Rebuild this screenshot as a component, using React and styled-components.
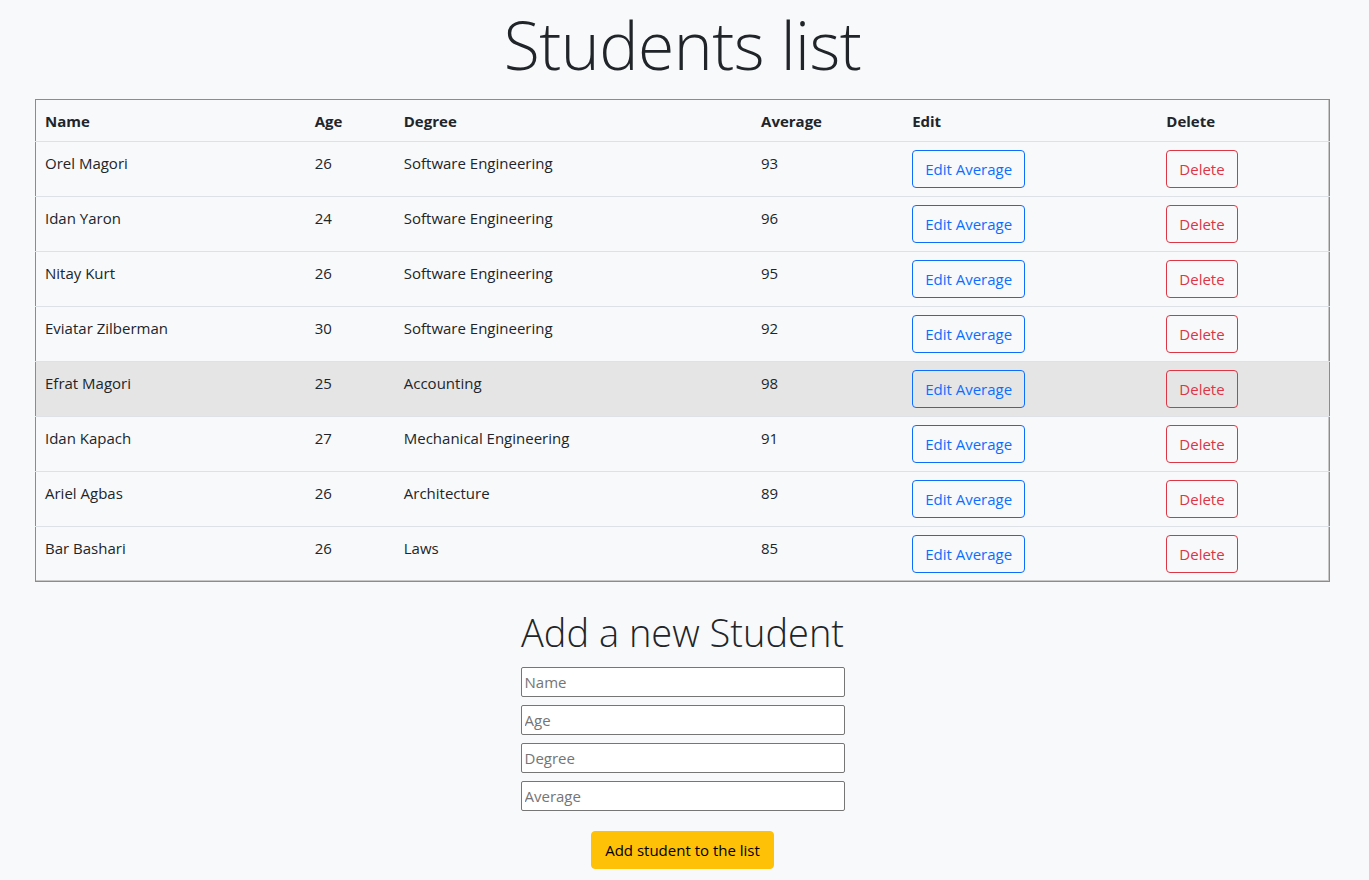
import React, { useState } from 'react'
import styled, { createGlobalStyle } from 'styled-components'

const GlobalStyle = createGlobalStyle`
body {
  margin: 0;
  background-color: #f8f9fa;
  color: #212529;
  font-family: 'Open Sans', 'Noto Sans', sans-serif;
  font-size: 15px;
  line-height: 1.5;
}
`

const Page = styled.div`
display: flex;
flex-direction: column;
align-items: center;
padding: 0 39px 11px 35px;
`
const Title = styled.h1`
font-size: 66px;
font-weight: 300;
line-height: 1.2;
margin: 5px 0 15px 0;
letter-spacing: -0.5px;
`
const Table = styled.table`
width: 100%;
table-layout: fixed;
border-collapse: collapse;
border: 1px solid #8c8c8c;
box-shadow: inset -1px -1px 0 #c8c8c8;
`
const HeadCell = styled.th`
box-sizing: border-box;
text-align: left;
font-weight: 700;
padding: 9px 9px 8px 9px;
line-height: 24px;
width: ${props => props.w}px;
border-bottom: 1px solid #dee2e6;
`
const Row = styled.tr`
background-color: ${props => props.hover ? '#e5e5e6' : 'transparent'};
border-bottom: ${props => props.last ? 'none' : '1px solid #dee2e6'};
`
const Cell = styled.td`
padding: 8px 9px;
vertical-align: top;
line-height: 26px;
`
const OutlineButton = styled.button`
font-family: inherit;
font-size: 15px;
line-height: 24px;
padding: 6px 12px;
border-radius: 4px;
background: transparent;
cursor: pointer;
color: ${props => props.color};
border: 1px solid ${props => props.color};
`
const SubTitle = styled.h2`
font-size: 38px;
font-weight: 300;
line-height: 1.2;
margin: 28px 0 11px 0;
`
const Form = styled.div`
display: flex;
flex-direction: column;
align-items: center;
gap: 8px;
`
const Input = styled.input`
width: 324px;
height: 30px;
box-sizing: border-box;
border: 1px solid #767676;
border-radius: 2px;
background: #fff;
font-family: inherit;
font-size: 15px;
padding: 1px 3px;
::placeholder {
  color: #757575;
}
`
const AddButton = styled.button`
margin-top: 12px;
font-family: inherit;
font-size: 15px;
line-height: 24px;
padding: 6px 13px;
border: 1px solid #ffc107;
border-radius: 4px;
background-color: #ffc107;
color: #000;
cursor: pointer;
`

const students = [
  { id: 1, name: 'Orel Magori', age: 26, degree: 'Software Engineering', average: 93 },
  { id: 2, name: 'Idan Yaron', age: 24, degree: 'Software Engineering', average: 96 },
  { id: 3, name: 'Nitay Kurt', age: 26, degree: 'Software Engineering', average: 95 },
  { id: 4, name: 'Eviatar Zilberman', age: 30, degree: 'Software Engineering', average: 92 },
  { id: 5, name: 'Efrat Magori', age: 25, degree: 'Accounting', average: 98 },
  { id: 6, name: 'Idan Kapach', age: 27, degree: 'Mechanical Engineering', average: 91 },
  { id: 7, name: 'Ariel Agbas', age: 26, degree: 'Architecture', average: 89 },
  { id: 8, name: 'Bar Bashari', age: 26, degree: 'Laws', average: 85 },
]

export default function App() {
  const [list] = useState(students)

  return (
    <Page>
      <GlobalStyle />
      <Title>Students list</Title>
      <Table>
        <thead>
          <tr>
            <HeadCell w={270}>Name</HeadCell>
            <HeadCell w={89}>Age</HeadCell>
            <HeadCell w={357}>Degree</HeadCell>
            <HeadCell w={151}>Average</HeadCell>
            <HeadCell w={254}>Edit</HeadCell>
            <HeadCell w={172}>Delete</HeadCell>
          </tr>
        </thead>
        <tbody>
          {list.map((item, i) => {
            return <Row key={item.id} hover={item.id === 5} last={i === list.length - 1}>
              <Cell>{item.name}</Cell>
              <Cell>{item.age}</Cell>
              <Cell>{item.degree}</Cell>
              <Cell>{item.average}</Cell>
              <Cell><OutlineButton color="#0d6efd">Edit Average</OutlineButton></Cell>
              <Cell><OutlineButton color="#dc3545">Delete</OutlineButton></Cell>
            </Row>
          })}
        </tbody>
      </Table>
      <SubTitle>Add a new Student</SubTitle>
      <Form>
        <Input placeholder="Name" />
        <Input placeholder="Age" />
        <Input placeholder="Degree" />
        <Input placeholder="Average" />
        <AddButton>Add student to the list</AddButton>
      </Form>
    </Page>
  )
}
